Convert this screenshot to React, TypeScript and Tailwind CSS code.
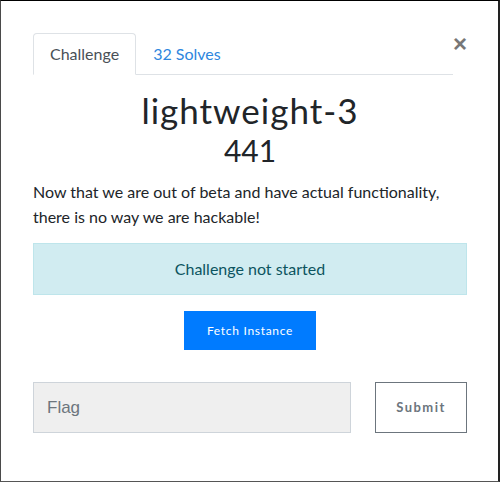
import React from "react";

export default function App() {
  return (
    <div
      className="w-[500px] h-[482px] bg-white border-t border-t-black border-l border-l-[#4a4a4a] border-r-2 border-r-[#222] border-b border-b-[#555] overflow-hidden"
      style={{ fontFamily: "Lato, 'Open Sans', sans-serif" }}
    >
      <div className="pl-[32px] pr-[31px] pt-[32px]">
        <div className="flex items-start">
          <div className="flex flex-1 border-b border-[#dee2e6]">
            <div className="h-[42px] px-[16px] flex items-center border border-[#dee2e6] border-b-white -mb-px rounded-t-[4px] text-[16px] text-[#495057] bg-white">
              Challenge
            </div>
            <div className="h-[41px] px-[17px] flex items-center text-[16px] text-[#2e86de]">
              32 Solves
            </div>
          </div>
          <button className="-mt-[1px] w-[14px] text-[24px] leading-[24px] font-bold text-[#777]" style={{ fontFamily: "'Liberation Sans', Arial, sans-serif" }}>
            ×
          </button>
        </div>

        <h3 className="text-center text-[35px] font-normal leading-[40px] mt-[15px] text-[#212529] tracking-[1px]">
          lightweight-3
        </h3>
        <h4 className="text-center text-[30px] font-normal leading-[30px] mt-[5px] text-[#212529]">
          441
        </h4>

        <p className="mt-[14px] text-[16px] leading-[25px] text-[#212529]">
          Now that we are out of beta and have actual functionality, there is no way we are hackable!
        </p>

        <div className="mt-[14px] h-[52px] bg-[#d1ecf1] border border-[#bee5eb] flex items-center justify-center text-[16px] text-[#0c5460]">
          Challenge not started
        </div>

        <div className="flex justify-center mt-[16px]">
          <button className="w-[132px] h-[39px] bg-[#007bff] text-white text-[12px] tracking-[0.7px]">
            Fetch Instance
          </button>
        </div>

        <div className="flex mt-[32px] gap-[24px]">
          <div
            className="w-[318px] h-[51px] bg-[#efefef] border border-[#ced4da] flex items-center pl-[13px] text-[17px] text-[#6c757d]"
            style={{ fontFamily: "'Liberation Sans', Arial, sans-serif" }}
          >
            Flag
          </div>
          <button className="w-[92px] h-[51px] border border-[#6c757d] text-[#6c757d] text-[13px] font-bold tracking-[1.5px] bg-white">
            Submit
          </button>
        </div>
      </div>
    </div>
  );
}
